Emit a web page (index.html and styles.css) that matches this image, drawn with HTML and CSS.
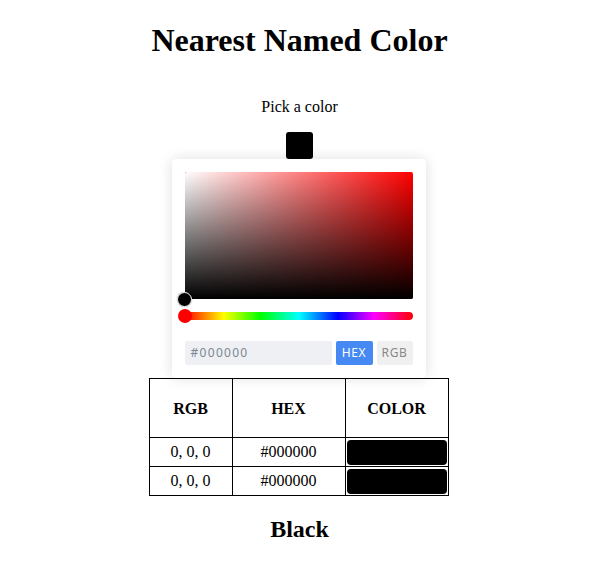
FILE: index.html
```html
<!DOCTYPE html>
<html>
<head>
<meta charset="utf-8">
<title>Nearest Named Color</title>
<link rel="stylesheet" href="styles.css">
</head>
<body>
<div class="app">
  <h1 class="title">Nearest Named Color</h1>
  <p class="label">Pick a color</p>
  <div class="swatch"></div>
  <div class="picker">
    <div class="sat">
      <div class="sat-white"></div>
      <div class="sat-black"></div>
      <span class="sat-thumb"></span>
    </div>
    <div class="hue">
      <span class="hue-thumb"></span>
    </div>
    <div class="inputs">
      <div class="hex-input">#000000</div>
      <div class="mode mode-active">HEX</div>
      <div class="mode">RGB</div>
    </div>
  </div>
  <table class="results">
    <colgroup>
      <col class="c1"><col class="c2"><col class="c3">
    </colgroup>
    <thead>
      <tr><th>RGB</th><th>HEX</th><th>COLOR</th></tr>
    </thead>
    <tbody>
      <tr><td>0, 0, 0</td><td>#000000</td><td class="cell-color"><div class="chip"></div></td></tr>
      <tr><td>0, 0, 0</td><td>#000000</td><td class="cell-color"><div class="chip"></div></td></tr>
    </tbody>
  </table>
  <h2 class="name">Black</h2>
</div>
</body>
</html>
```

FILE: styles.css
```css
html, body {
  margin: 0;
  padding: 0;
  background: #fff;
}
body {
  font-family: "Liberation Serif", "Times New Roman", serif;
  color: #000;
}
.app {
  display: flex;
  flex-direction: column;
  align-items: center;
}
.title {
  font-size: 32px;
  line-height: 37px;
  font-weight: bold;
  margin: 22px 0 0;
}
.label {
  font-size: 16px;
  line-height: 18px;
  margin: 39px 0 0;
}
.swatch {
  width: 27px;
  height: 27px;
  background: #000;
  border-radius: 3px;
  margin-top: 16px;
  position: relative;
  z-index: 2;
}
.picker {
  width: 228px;
  padding: 13px;
  margin-right: 2px;
  background: #fff;
  border-radius: 4px;
  box-shadow: 0 0 14px rgba(0, 0, 0, 0.13);
  display: flex;
  flex-direction: column;
  position: relative;
  z-index: 1;
}
.sat {
  position: relative;
  height: 127px;
  background: #ff0000;
  border-radius: 2px;
}
.sat-white, .sat-black {
  position: absolute;
  inset: 0;
  border-radius: 2px;
}
.sat-white {
  background: linear-gradient(to right, #fff, rgba(255, 255, 255, 0));
}
.sat-black {
  background: linear-gradient(to top, #000, rgba(0, 0, 0, 0));
}
.sat-thumb {
  position: absolute;
  left: -8px;
  bottom: -8px;
  width: 13px;
  height: 13px;
  border-radius: 50%;
  background: #000;
  border: 1.5px solid #fff;
  box-shadow: 0 0 1px rgba(0, 0, 0, 0.5);
}
.hue {
  position: relative;
  height: 8px;
  margin-top: 13px;
  border-radius: 4px;
  background: linear-gradient(to right, #f00 0%, #ff0 17%, #0f0 33%, #0ff 50%, #00f 67%, #f0f 83%, #f00 100%);
}
.hue-thumb {
  position: absolute;
  left: -7px;
  top: -3px;
  width: 14px;
  height: 14px;
  border-radius: 50%;
  background: #f00;
}
.inputs {
  display: flex;
  gap: 4px;
  margin-top: 21px;
  height: 24px;
  font-family: "Noto Sans", "Open Sans", sans-serif;
  font-size: 12px;
}
.hex-input {
  flex: 1;
  background: #eef0f3;
  border-radius: 2px;
  color: #7a8794;
  letter-spacing: 1.3px;
  padding-left: 6px;
  line-height: 24px;
}
.mode {
  width: 36px;
  text-align: center;
  line-height: 24px;
  border-radius: 2px;
  background: #f0f0f0;
  color: #888;
  letter-spacing: 0.6px;
}
.mode-active {
  width: 37px;
  background: #4689f3;
  color: #fff;
}
.results {
  border-collapse: collapse;
  table-layout: fixed;
  width: 300px;
  margin: 0 2px 0 0;
  font-size: 16px;
  line-height: 18px;
}
.c1 { width: 83px; }
.c2 { width: 113px; }
.c3 { width: 103px; }
.results th, .results td {
  border: 1px solid #000;
  text-align: center;
  padding: 0;
}
.results th {
  height: 56px;
  padding-top: 2px;
  font-weight: bold;
}
.results td {
  height: 26px;
}
.results td.cell-color {
  padding: 1px;
}
.chip {
  height: 25px;
  background: #000;
  border-radius: 4px;
}
.name {
  font-size: 24px;
  line-height: 28px;
  font-weight: bold;
  margin: 19px 0 0;
}
```
